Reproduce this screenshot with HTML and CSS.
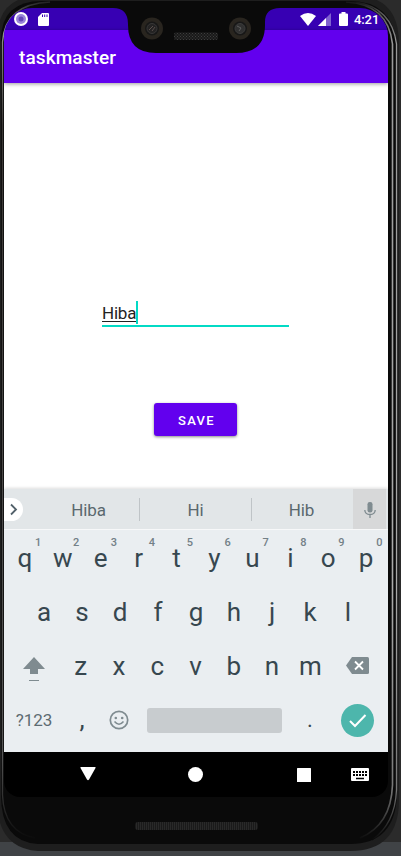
FILE: index.html
```html
<!DOCTYPE html>
<html lang="en">
<head>
<meta charset="utf-8">
<title>taskmaster</title>
<link rel="stylesheet" href="styles.css">
</head>
<body>
<div class="device">
  <svg class="frame" width="401" height="856" viewBox="0 0 401 856" fill="none">
    <defs>
      <linearGradient id="edge" gradientUnits="userSpaceOnUse" x1="0" y1="0" x2="0" y2="840">
        <stop offset="0" stop-color="#0a0a0a"/><stop offset=".015" stop-color="#555"/><stop offset=".05" stop-color="#999"/><stop offset=".7" stop-color="#aaa"/><stop offset=".94" stop-color="#777"/><stop offset="1" stop-color="#0a0a0a"/>
      </linearGradient>
      <linearGradient id="left" gradientUnits="userSpaceOnUse" x1="0" y1="0" x2="0" y2="840">
        <stop offset="0" stop-color="#1a1a1a"/><stop offset=".03" stop-color="#999"/><stop offset=".15" stop-color="#3a3735"/><stop offset=".9" stop-color="#555"/><stop offset="1" stop-color="#0a0a0a"/>
      </linearGradient>
    </defs>
    <path d="M0 0H401V856H0Z" fill="#2b2b2b"/>
    <path d="M0 842H401V856H0Z" fill="#404346"/>
    <path d="M-3 40Q-3 -4 40 -4H355Q399 -4 399 44V800Q399 851 350 851H38Q-3 848 -3 800Z" fill="#1e1e1e"/>
    <path d="M1 40Q1 1 42 1H350Q392 1 397 44V795Q395 844 350 844H38Q1 842 1 795Z" fill="#0a0a0a"/>
    <path d="M346 2Q388 4 392.500 44V785Q391 825 360 838" stroke="url(#edge)" stroke-width="1.600"/>
    <path d="M356 2Q392 8 396.500 44V790Q395 824 372 840" stroke="url(#edge)" stroke-width="1.300"/>
    <path d="M50 2Q5 4 2.500 42V795Q4 832 35 838" stroke="url(#left)" stroke-width="1.300"/>
  </svg>
  <main class="screen">
    <header class="status">
      <div class="group">
        <svg class="ring" width="14" height="14" viewBox="0 0 14 14"><circle cx="7" cy="7" r="7" fill="#fff"/><circle cx="7" cy="7" r="5" fill="#9a84da"/><circle cx="7" cy="7" r="2.500" fill="#6547b8"/></svg>
        <svg width="11" height="13" viewBox="0 0 11 13"><path d="M4 0H10Q11 0 11 1V12Q11 13 10 13H1Q0 13 0 12V4Z" fill="#fff"/><path d="M4.500 1.500V4M6.700 1.500V4M9 1.500V4" stroke="#3700b3"/></svg>
      </div>
      <div class="group right">
        <svg width="16" height="13" viewBox="0 0 16 13"><path d="M0 3Q8-3 16 3L8 13Z" fill="#fff"/></svg>
        <svg class="signal" width="13" height="13" viewBox="0 0 13 13"><path d="M13 0V13H0Z" fill="#8062d0"/><path d="M8 5V13H0Z" fill="#fff"/></svg>
        <svg class="battery" width="9" height="14" viewBox="0 0 9 14"><path d="M2.500 0H6.500V1.500H8Q9 1.500 9 2.500V13Q9 14 8 14H1Q0 14 0 13V2.500Q0 1.500 1 1.500H2.500Z" fill="#fff"/></svg>
        <span class="time">4:21</span>
      </div>
    </header>
    <div class="appbar">taskmaster</div>
    <section class="content">
      <div class="field"><span class="value">Hiba</span><i class="caret"></i></div>
      <button class="save">SAVE</button>
    </section>
    <section class="suggest">
      <div class="expand"><svg width="19" height="23" viewBox="0 0 19 23"><path d="M7 6.500L12 11.500L7 16.500" fill="none" stroke="#52616a" stroke-width="1.800"/></svg></div>
      <span class="word first">Hiba</span><span class="word">Hi</span><span class="word last">Hib</span>
      <div class="mic"><svg width="12" height="17" viewBox="0 0 12 17"><rect x="3.500" y="0" width="5" height="10.500" rx="2.200" fill="#7f8b90"/><path d="M.8 8Q1 12.500 6 12.500T11.200 8M6 12.500V16" fill="none" stroke="#7f8b90" stroke-width="1.300"/></svg></div>
    </section>
    <section class="keyboard">
      <div class="row top">
        <span>q<sup>1</sup></span><span>w<sup>2</sup></span><span>e<sup>3</sup></span><span>r<sup>4</sup></span><span>t<sup>5</sup></span><span>y<sup>6</sup></span><span>u<sup>7</sup></span><span>i<sup>8</sup></span><span>o<sup>9</sup></span><span>p<sup>0</sup></span>
      </div>
      <div class="row middle"><span>a</span><span>s</span><span>d</span><span>f</span><span>g</span><span>h</span><span>j</span><span>k</span><span>l</span></div>
      <div class="row third">
        <div class="side"><svg width="22" height="25" viewBox="0 0 22 25"><path d="M11 0L22 12H15V17H7V12H0Z" fill="#7f8b90"/><path d="M6 23.500H16" stroke="#7f8b90"/></svg></div>
        <span>z</span><span>x</span><span>c</span><span>v</span><span>b</span><span>n</span><span>m</span>
        <div class="side del"><svg width="23" height="17" viewBox="0 0 23 17"><path d="M6 0H21.500Q23 0 23 1.500V15.500Q23 17 21.500 17H6L0 8.500Z" fill="#7f8b90"/><path d="M9 4.500L17 12.500M17 4.500L9 12.500" stroke="#fff" stroke-width="1.800"/></svg></div>
      </div>
      <div class="row bottom">
        <span class="symbols">?123</span><span class="comma">,</span>
        <svg class="emoji" width="20" height="20" viewBox="0 0 20 20"><circle cx="10" cy="10" r="8.700" fill="none" stroke="#7f8b90" stroke-width="1.700"/><circle cx="6.800" cy="8" r="1.300" fill="#7f8b90"/><circle cx="13.200" cy="8" r="1.300" fill="#7f8b90"/><path d="M5.500 11.500Q10 17 14.500 11.500" fill="none" stroke="#7f8b90" stroke-width="1.500"/></svg>
        <div class="space"></div><span class="period">.</span>
        <div class="enter"><svg width="33" height="33" viewBox="0 0 33 33"><path d="M9 17L14 22L24.500 11" fill="none" stroke="#fff" stroke-width="2"/></svg></div>
      </div>
    </section>
    <nav class="nav">
      <svg class="back" width="16" height="14" viewBox="0 0 16 14"><path d="M1 0H15Q16 0 15.500 1L9 12.500Q8 14 7 12.500L.5 1Q0 0 1 0Z" fill="#fff"/></svg>
      <svg class="home" width="15" height="15" viewBox="0 0 15 15"><circle cx="7.500" cy="7.500" r="7.500" fill="#fff"/></svg>
      <svg class="recent" width="14" height="14" viewBox="0 0 14 14"><rect width="14" height="14" rx=".5" fill="#fff"/></svg>
      <svg class="kbd" width="18" height="13" viewBox="0 0 18 13"><rect width="18" height="13" rx="1" fill="#fff"/><path d="M2 4H16M2 7H16" stroke="#000" stroke-width="2" stroke-dasharray="2 1"/><path d="M5 10.500H13" stroke="#000" stroke-width="1.500"/></svg>
    </nav>
  </main>
  <svg class="notch" width="401" height="60" viewBox="0 0 401 60">
    <defs><pattern id="mesh" width="3" height="3" patternUnits="userSpaceOnUse"><rect width="3" height="3" fill="#191919"/><path d="M0 0H1V1H0ZM1.500 1.500H2.500V2.500H1.500Z" fill="#3e3e3e"/></pattern></defs>
    <path d="M110 2V8H113Q128 8 128 24V25Q128 53 156 53H236Q265 53 265 25V22Q265 8 280 8H284V2Z" fill="#0a0a0a"/>
    <g><circle cx="152" cy="28.500" r="11" fill="#29251f"/><circle cx="152" cy="28.500" r="7" fill="#171717"/><circle cx="152" cy="28.500" r="5" fill="#242323" stroke="#383737"/><path d="M149 30L153 26M152 31L155 27" stroke="#5a4e4b"/></g>
    <g><circle cx="240" cy="28.500" r="11" fill="#29251f"/><circle cx="240" cy="28.500" r="7" fill="#171717"/><circle cx="240" cy="28.500" r="5" fill="#303030" stroke="#3c3c3c"/><path d="M237 26L241 28L239 31" stroke="#5c5c5c" fill="none"/></g>
    <rect x="174" y="32.500" width="44" height="7.500" rx="2" fill="url(#mesh)"/>
  </svg>
  <div class="speaker"></div>
</div>
</body>
</html>
```
FILE: styles.css
```css
* { box-sizing: border-box; }
body { margin: 0; font-family: Roboto, sans-serif; overflow: hidden; }
svg { display: block; flex: none; }
.device { position: relative; width: 401px; height: 856px; padding: 8px 13px 0 4px; }
.frame, .notch { position: absolute; left: 0; top: 0; }
.notch { z-index: 3; }
.screen { position: relative; width: 384px; height: 789px; border-radius: 28px 28px 16px 16px; overflow: hidden; display: flex; flex-direction: column; }
.status { height: 22px; background: #3700b3; display: flex; justify-content: space-between; padding: 0 8px 0 10px; color: #fff; }
.group { display: flex; align-items: center; gap: 10px; }
.right { gap: 0; }
.signal { margin-left: 2px; }
.battery { margin-left: 8px; }
.time { font-size: 13px; font-weight: 500; margin-left: 6px; line-height: 24px; width: 26px; padding-top: 1px; letter-spacing: -.1px; }
.appbar { height: 53px; background: #6200ee; color: #fff; font-size: 19px; font-weight: 500; line-height: 55px; padding-left: 15px; letter-spacing: .1px; box-shadow: 0 1px 4px #0006; z-index: 1; }
.content { height: 406px; background: #fff; display: flex; flex-direction: column; align-items: center; padding-top: 217px; }
.field { width: 187px; height: 27px; border-bottom: 2px solid #03dac5; display: flex; align-items: flex-start; margin-right: 1px; }
.value { font-size: 17px; line-height: 20px; margin-top: 3px; height: 19px; border-bottom: 1px solid #222; color: #222; letter-spacing: -.2px; }
.caret { width: 2px; height: 23px; background: #03dac5; margin-top: 1px; }
.save { margin-top: 76px; margin-right: 1px; width: 83px; height: 33px; border: 0; border-radius: 3px; background: #6200ee; color: #fff; font: 500 13px Roboto, sans-serif; letter-spacing: 1.300px; padding: 1px 0 0 2px; box-shadow: 0 1px 3px #0007; }
.suggest { height: 40px; background: #e2e6e8; display: flex; align-items: center; color: #5a686e; font-size: 17px; box-shadow: 0 -1px 3px #0002; }
.expand { width: 19px; height: 23px; border-radius: 0 12px 12px 0; background: #fff; }
.word { width: 112px; text-align: center; line-height: 23px; border-right: 1px solid #bfc4c7; padding-top: 1px; height: 23px; letter-spacing: -.1px; }
.first { width: 117px; padding-left: 15px; }
.last { width: 101px; border: 0; padding-right: 2px; }
.mic { width: 33px; height: 40px; background: #d7d8d9; display: flex; align-items: center; justify-content: center; padding-top: 2px; }
.keyboard { height: 223px; background: #eaeef1; border-top: 1px solid #f7f8f9; color: #37474f; font-size: 26px; }
.row { display: flex; align-items: center; height: 54px; }
.row > span { flex: 1; text-align: center; position: relative; line-height: 30px; top: -1px; }
.top { padding: 2px 3px 0 2px; height: 56px; }
sup { position: absolute; font-size: 11px; font-weight: 500; color: #738087; line-height: 12px; left: 29px; top: -6px; }
.middle { padding: 0 21px; }
.third { padding: 0 2px; }
.third > span { left: -.5px; }
.side { width: 56px; display: flex; justify-content: center; padding-top: 4px; }
.del { padding: 0 0 3px; }
.bottom { height: 54px; padding-bottom: 2px; }
.row .symbols { flex: none; width: 60px; font-size: 17px; color: #5d6b72; top: 0; }
.row .comma { flex: none; width: 36px; }
.emoji { margin: 0 0 1px 9px; }
.space { width: 135px; height: 25px; margin-left: 18px; border-radius: 3px; background: #c8cccf; }
.row .period { flex: none; width: 55px; font-size: 22px; top: 0; left: .5px; }
.enter { width: 33px; height: 33px; margin-left: 4px; border-radius: 50%; background: #4db6ac; }
.nav { height: 45px; background: #000; display: flex; align-items: center; }
.back { margin-left: 76px; margin-bottom: 1px; }
.home { margin-left: 92px; }
.recent { margin-left: 94px; }
.kbd { margin-left: 40px; }
.speaker { position: absolute; left: 135px; top: 822px; width: 123px; height: 8px; border-radius: 3px; background: repeating-linear-gradient(90deg, #1a1a1a 0 1px, #292929 1px 2px); }
```
